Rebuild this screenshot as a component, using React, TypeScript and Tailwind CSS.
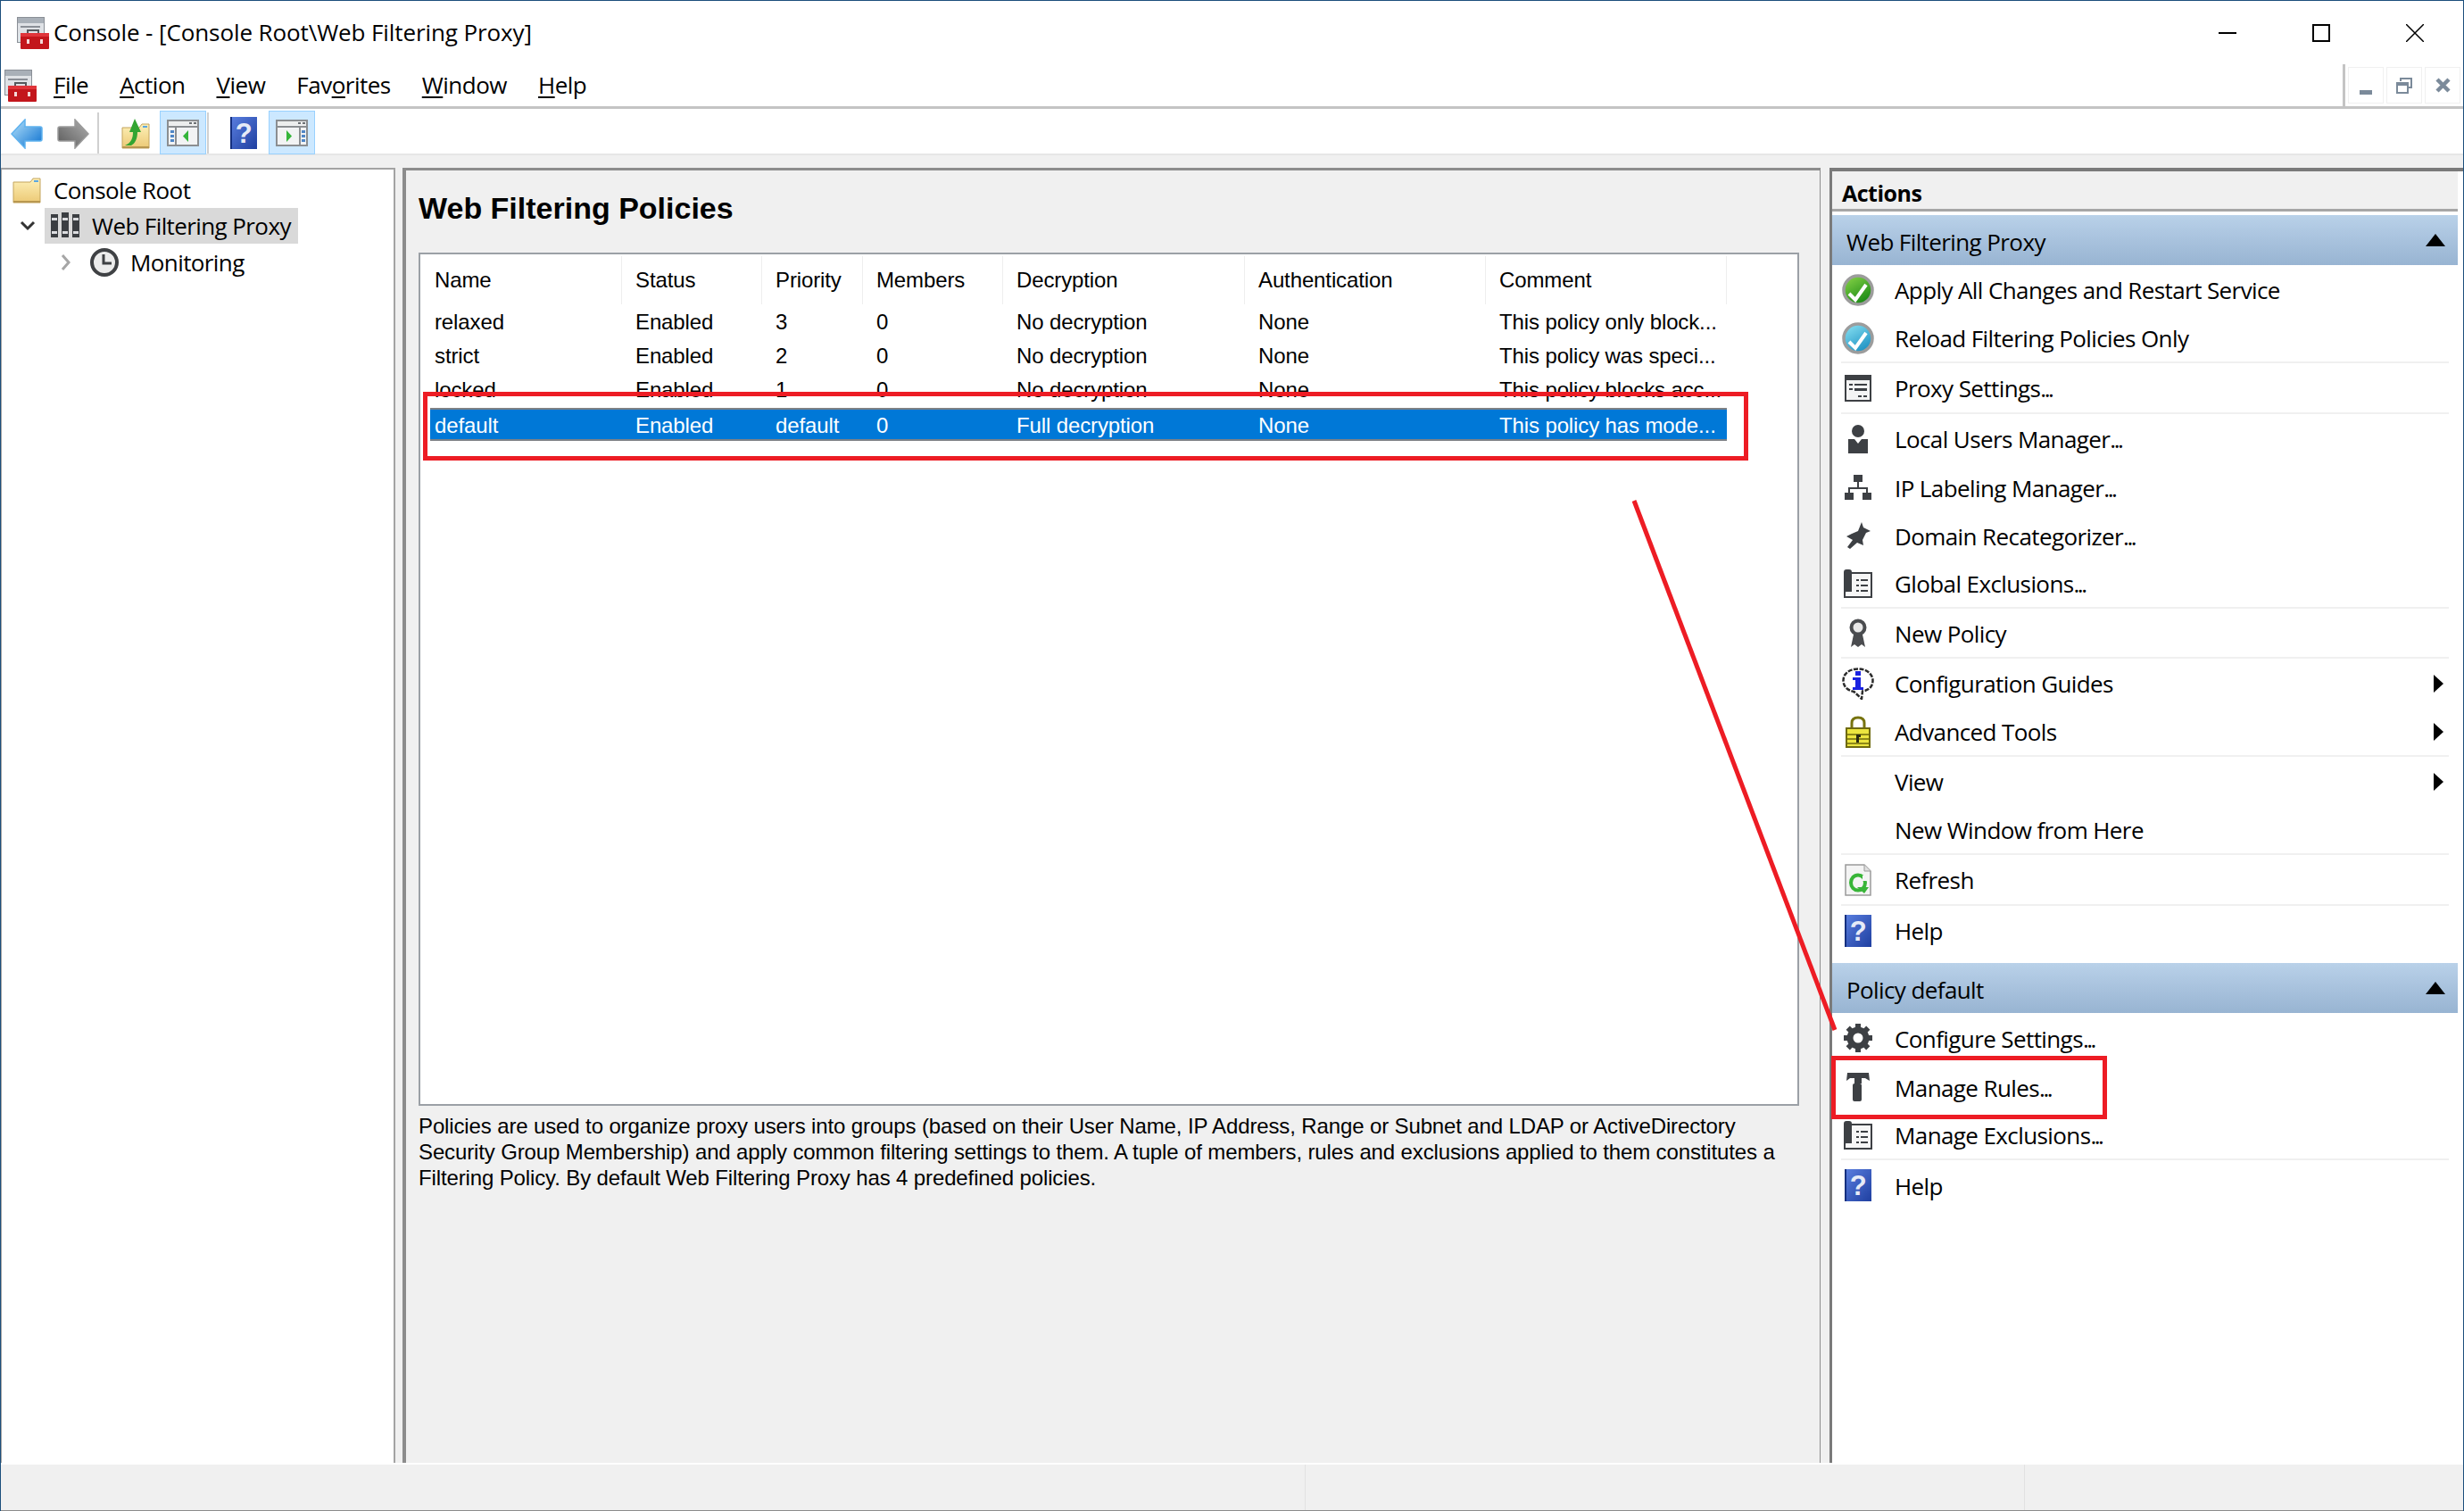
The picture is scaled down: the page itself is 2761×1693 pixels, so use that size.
import React from 'react';

const ui = "font-['Open_Sans','Noto_Sans',sans-serif]";
const classic = "font-['Liberation_Sans',Arial,sans-serif]";

const Toolbox = () => (
  <svg width="36" height="36" viewBox="0 0 36 36">
    <rect x="0.5" y="0.5" width="30" height="28" fill="#dfe2e6" stroke="#8a8f96" />
    <rect x="1" y="1" width="29" height="6" fill="#a9b0b8" />
    <rect x="4" y="10" width="22" height="2" fill="#8a8f96" />
    <path d="M12 19v-4h12v4" fill="none" stroke="#55585c" strokeWidth="2" />
    <rect x="4" y="18" width="32" height="18" rx="1" fill="#c3161c" />
    <rect x="4" y="18" width="32" height="4" fill="#e0343a" />
    <rect x="11" y="25" width="3" height="5" fill="#f4d9d9" />
    <rect x="26" y="25" width="3" height="5" fill="#f4d9d9" />
  </svg>
);

const Arrow = ({ dir, edge, from, to }: { dir: 'l' | 'r'; edge: string; from: string; to: string }) => (
  <svg width="36" height="34" viewBox="0 0 36 34">
    <defs>
      <linearGradient id={`arrow-${dir}`} x1={dir === 'l' ? '0' : '1'} y1="0" x2={dir === 'l' ? '1' : '0'} y2="1">
        <stop offset="0" stopColor={from} />
        <stop offset="1" stopColor={to} />
      </linearGradient>
    </defs>
    <path
      d={dir === 'l' ? 'M1 17 16 1v8h17q2 0 2 2v12q0 2-2 2H16v8z' : 'M35 17 20 1v8H3q-2 0-2 2v12q0 2 2 2h17v8z'}
      fill={`url(#arrow-${dir})`}
      stroke={edge}
      strokeWidth="1.500"
    />
  </svg>
);

const Folder = ({ up }: { up?: boolean }) => (
  <svg width="32" height={up ? 34 : 30} viewBox={up ? '0 -4 32 34' : '0 0 32 30'}>
    <defs>
      <linearGradient id="folder-fill" x1="0" y1="0" x2="0" y2="1">
        <stop offset="0" stopColor="#fdf0b8" />
        <stop offset="1" stopColor="#ecc975" />
      </linearGradient>
    </defs>
    <path d="M1 29V6h19l3-4h8v27z" fill="url(#folder-fill)" stroke="#c3a45c" />
    <rect x="1" y="27" width="30" height="2" fill="#b8974f" />
    <rect x="24" y="4" width="5" height="2" fill="#5aa7e0" />
    {up && <path d="M4 26c7-3 9-8 9-15H9l6-15 7 15h-4c0 8-3 13-7 15z" fill="#33a532" />}
  </svg>
);

const PanelToggle = ({ flip }: { flip?: boolean }) => (
  <svg width="36" height="30" viewBox="0 0 36 30">
    <rect x="1" y="1" width="34" height="28" fill="#f2f3f4" stroke="#8b8e91" strokeWidth="2" />
    <rect x="2" y="2" width="32" height="4" fill="#eceded" />
    <rect x="25" y="3" width="3" height="2" fill="#6c7074" />
    <rect x="30" y="3" width="3" height="2" fill="#6c7074" />
    <rect x="1" y="7" width="34" height="2" fill="#8b8e91" />
    <rect x={flip ? 26 : 9} y="9" width="2" height="20" fill="#8b8e91" />
    {[12, 17, 22].map(y => (
      <rect key={y} x={flip ? 29 : 4} y={y} width="4" height="3" fill="#4f86c6" />
    ))}
    <path d={flip ? 'M12 12v13l6-6.500z' : 'M24 12v13l-6-6.500z'} fill="#35b53a" />
  </svg>
);

const HelpBook = ({ w = 30, h = 36 }: { w?: number; h?: number }) => (
  <svg width={w} height={h} viewBox="0 0 30 36">
    <defs>
      <linearGradient id={`help-${w}`} x1="0" y1="0" x2="1" y2="1">
        <stop offset="0" stopColor="#5a7fe0" />
        <stop offset="1" stopColor="#1f3fa0" />
      </linearGradient>
    </defs>
    <rect width="30" height="36" fill={`url(#help-${w})`} />
    <rect x="0" y="0" width="2" height="36" fill="#15307f" />
    <text x="15" y="29" textAnchor="middle" fontSize="31" fontWeight="700" fill="#e6ebf7" fontFamily="Liberation Sans">?</text>
  </svg>
);

const Books = () => (
  <svg width="34" height="30" viewBox="0 0 34 30">
    {[1, 13, 25].map(x => (
      <g key={x}>
        <rect x={x} y={x === 13 ? 0 : 2} width="8" height={x === 13 ? 28 : 26} fill="#3b3e42" />
        <rect x={x + 1} y="6" width="6" height="3" fill="#dcdde0" />
        <rect x={x + 1} y="21" width="6" height="3" fill="#dcdde0" />
      </g>
    ))}
  </svg>
);

const Clock = () => (
  <svg width="32" height="32" viewBox="0 0 32 32">
    <circle cx="16" cy="16" r="14" fill="#ececec" stroke="#3f4144" strokeWidth="4" />
    <path d="M15 7v10h9" fill="none" stroke="#3f4144" strokeWidth="3" />
  </svg>
);

const Check = ({ light, dark }: { light: string; dark: string }) => (
  <svg width="36" height="36" viewBox="0 0 36 36">
    <defs>
      <linearGradient id={`check-${dark}`} x1="0" y1="0" x2="0.6" y2="1">
        <stop offset="0" stopColor={light} />
        <stop offset="1" stopColor={dark} />
      </linearGradient>
    </defs>
    <circle cx="18" cy="18" r="16" fill={`url(#check-${dark})`} stroke="#9c9c9c" strokeWidth="3.500" />
    <path d="M8 22l7 7 12-17" fill="none" stroke="#fff" strokeWidth="4" />
  </svg>
);

const ProxySettingsIcon = () => (
  <svg width="30" height="30" viewBox="0 0 30 30">
    <rect x="1" y="1" width="28" height="28" fill="#f4f4f4" stroke="#3d4044" strokeWidth="2" />
    <rect x="1" y="1" width="28" height="5" fill="#3d4044" />
    <rect x="5" y="10" width="4" height="2" fill="#3d4044" />
    <rect x="11" y="10" width="14" height="2" fill="#3d4044" />
    <rect x="5" y="15" width="4" height="2" fill="#3d4044" />
    <rect x="11" y="15" width="14" height="3" fill="#3d4044" />
    <rect x="15" y="23" width="4" height="2" fill="#3d4044" />
    <rect x="21" y="23" width="4" height="2" fill="#3d4044" />
  </svg>
);

const UserIcon = () => (
  <svg width="24" height="32" viewBox="0 0 24 32">
    <ellipse cx="12" cy="7" rx="7" ry="7" fill="#3d4044" />
    <path d="M1 16h7l4 5 4-5h7v16H1z" fill="#3d4044" />
  </svg>
);

const TreeIcon = () => (
  <svg width="30" height="28" viewBox="0 0 30 28">
    <rect x="10" y="0" width="10" height="8" fill="#3d4044" />
    <path d="M15 8v6M5 20v-5h20v5" fill="none" stroke="#3d4044" strokeWidth="2" />
    <rect x="0" y="20" width="10" height="8" fill="#3d4044" />
    <rect x="20" y="20" width="10" height="8" fill="#3d4044" />
  </svg>
);

const PinIcon = () => (
  <svg width="30" height="30" viewBox="0 0 30 30">
    <path d="M19 0l2 6 8 4-5 2-4 8 1 6-7-3-8 7-3-2 6-8-7-4 6-3 7-3z" fill="#3d4044" />
  </svg>
);

const ScrollIcon = () => (
  <svg width="32" height="32" viewBox="0 0 32 32">
    <rect x="1" y="4" width="30" height="27" fill="#f6f6f6" stroke="#3d4044" strokeWidth="2" />
    <path d="M0 28V3q0-3 3-3h3q3 0 3 3v22H3q-3 0-3 3z" fill="#3d4044" />
    {[11, 17, 23].map(y => (
      <g key={y}>
        <rect x="14" y={y} width="3" height="2" fill="#3d4044" />
        <rect x="19" y={y} width="8" height="2" fill="#3d4044" />
      </g>
    ))}
  </svg>
);

const RibbonIcon = () => (
  <svg width="20" height="32" viewBox="0 0 20 32">
    <path d="M5 18 2 32l4-3 4 3 4-3 4 3-3-14z" fill="#4a4c4f" />
    <circle cx="10" cy="10" r="7.500" fill="#e8e8e8" stroke="#4a4c4f" strokeWidth="4" />
  </svg>
);

const InfoIcon = () => (
  <svg width="36" height="36" viewBox="0 0 36 36">
    <path d="M18 1.500C8 1.500 1.500 7 1.500 14.500c0 7 5 11 12 12.500L22 35l1-8.500c7-1 11.500-5 11.500-12S28 1.500 18 1.500z" fill="#fff" stroke="#2b2b2b" strokeWidth="2.500" strokeDasharray="5 1.500" />
    <rect x="15" y="4" width="6" height="5" fill="#1a22e0" />
    <path d="M12 11h9v11h3v3H12v-3h3v-8h-3z" fill="#1a22e0" />
  </svg>
);

const LockIcon = () => (
  <svg width="28" height="36" viewBox="0 0 28 36">
    <path d="M7 16V8q0-6 7-6t7 6v8" fill="none" stroke="#77730f" strokeWidth="3" />
    <rect x="1" y="14" width="26" height="21" fill="#ece53f" stroke="#6f6a10" strokeWidth="2" />
    <rect x="2" y="20" width="24" height="2" fill="#8d8818" />
    <rect x="2" y="25" width="24" height="2" fill="#8d8818" />
    <rect x="2" y="30" width="24" height="2" fill="#8d8818" />
    <rect x="12" y="21" width="5" height="3" fill="#2a2a10" />
    <rect x="12" y="21" width="3" height="9" fill="#2a2a10" />
  </svg>
);

const RefreshIcon = () => (
  <svg width="30" height="36" viewBox="0 0 30 36">
    <path d="M1 1h21l7 7v27H1z" fill="#f4f4f4" stroke="#9a9a9a" strokeWidth="1.500" />
    <path d="M22 1v7h7" fill="#e0e0e0" stroke="#9a9a9a" />
    <ellipse cx="15" cy="21" rx="8" ry="8.500" fill="none" stroke="#38b538" strokeWidth="4" />
    <path d="M14 26h13l-5 7z" fill="#38b538" />
    <rect x="20" y="13" width="6" height="6" fill="#f4f4f4" />
  </svg>
);

const GearIcon = () => (
  <svg width="32" height="32" viewBox="0 0 32 32">
    <circle cx="16" cy="16" r="9" fill="none" stroke="#3d4044" strokeWidth="7" />
    <path d="M16 0v6M16 26v6M0 16h6M26 16h6M4.700 4.700l4.300 4.300M23 23l4.300 4.300M27.300 4.700 23 9M9 23l-4.300 4.300" stroke="#3d4044" strokeWidth="6" />
  </svg>
);

const HammerIcon = () => (
  <svg width="28" height="32" viewBox="0 0 28 32">
    <path d="M2 0h24l1 9-5-3h-4v6H10V6H5L1 9z" fill="#3d4044" />
    <rect x="8" y="12" width="10" height="20" rx="2" fill="#3d4044" />
  </svg>
);

const Triangle = ({ up }: { up?: boolean }) =>
  up ? (
    <svg width="22" height="14" viewBox="0 0 22 14"><path d="M11 0 22 14H0z" fill="#000" /></svg>
  ) : (
    <svg width="11" height="20" viewBox="0 0 11 20"><path d="M0 0 11 10 0 20z" fill="#000" /></svg>
  );

type Action = { label: string; icon?: React.ReactNode; h: string; sep?: boolean; more?: boolean };

const proxyActions: Action[] = [
  { label: 'Apply All Changes and Restart Service', icon: <Check light="#8ed84a" dark="#1b8a16" />, h: 'h-[55px]' },
  { label: 'Reload Filtering Policies Only', icon: <Check light="#8fe6f5" dark="#1f93c4" />, h: 'h-[55px]', sep: true },
  { label: 'Proxy Settings...', icon: <ProxySettingsIcon />, h: 'h-[57px]', sep: true },
  { label: 'Local Users Manager...', icon: <UserIcon />, h: 'h-[55px]' },
  { label: 'IP Labeling Manager...', icon: <TreeIcon />, h: 'h-[54px]' },
  { label: 'Domain Recategorizer...', icon: <PinIcon />, h: 'h-[54px]' },
  { label: 'Global Exclusions...', icon: <ScrollIcon />, h: 'h-[55px]', sep: true },
  { label: 'New Policy', icon: <RibbonIcon />, h: 'h-[56px]', sep: true },
  { label: 'Configuration Guides', icon: <InfoIcon />, h: 'h-[55px]', more: true },
  { label: 'Advanced Tools', icon: <LockIcon />, h: 'h-[55px]', more: true, sep: true },
  { label: 'View', h: 'h-[55px]', more: true },
  { label: 'New Window from Here', h: 'h-[55px]', sep: true },
  { label: 'Refresh', icon: <RefreshIcon />, h: 'h-[57px]', sep: true },
  { label: 'Help', icon: <HelpBook />, h: 'h-[55px]' },
];

const policyActions: Action[] = [
  { label: 'Configure Settings...', icon: <GearIcon />, h: 'h-[56px]' },
  { label: 'Manage Rules...', icon: <HammerIcon />, h: 'h-[54px]' },
  { label: 'Manage Exclusions...', icon: <ScrollIcon />, h: 'h-[55px]', sep: true },
  { label: 'Help', icon: <HelpBook />, h: 'h-[56px]' },
];

const policies = [
  ['relaxed', 'Enabled', '3', '0', 'No decryption', 'None', 'This policy only block...'],
  ['strict', 'Enabled', '2', '0', 'No decryption', 'None', 'This policy was speci...'],
  ['locked', 'Enabled', '1', '0', 'No decryption', 'None', 'This policy blocks acc...'],
];
const selectedPolicy = ['default', 'Enabled', 'default', '0', 'Full decryption', 'None', 'This policy has mode...'];
const columns = ['Name', 'Status', 'Priority', 'Members', 'Decryption', 'Authentication', 'Comment'];
const grid = 'grid grid-cols-[215px_157px_113px_157px_271px_270px_270px] w-[1453px]';

const Key = ({ children }: { children: React.ReactNode }) => <span className="underline underline-offset-[3px]">{children}</span>;

// the dots sit tighter in the original than Open Sans sets them
const Label = ({ text }: { text: string }) =>
  text.endsWith('...') ? (
    <>{text.slice(0, -3)}<span className="tracking-[-2.5px]">...</span></>
  ) : (
    <>{text}</>
  );

const ActionRow = ({ a }: { a: Action }) => (
  <div className={`${a.h} mx-[10px] pl-[1px] pr-[6px] flex items-center ${a.sep ? 'border-b-2 border-[#f0f0f0]' : ''}`}>
    <div className="w-[36px] h-[36px] flex items-center justify-center shrink-0">{a.icon}</div>
    <span className="ml-[23px] pt-[2px]"><Label text={a.label} /></span>
    {a.more && <span className="ml-auto flex"><Triangle /></span>}
  </div>
);

const SectionHeader = ({ label }: { label: string }) => (
  <div className="h-[56px] flex items-center justify-between pl-[16px] pr-[14px] bg-gradient-to-b from-[#b9d1e9] to-[#98b4d2]">
    <span className="pt-[5px]">{label}</span>
    <Triangle up />
  </div>
);

export default function App() {
  return (
    <div className={`relative w-[2761px] h-[1693px] overflow-hidden bg-white text-black flex flex-col border-x border-t border-[#1c4f7c] ${ui} text-[26px] tracking-[-0.6px]`}>
      {/* title bar */}
      <div className="h-[71px] shrink-0 flex items-center">
        <div className="ml-[18px] mr-[5px] flex"><Toolbox /></div>
        <span className="tracking-[-0.1px]">Console - [Console Root\Web Filtering Proxy]</span>
        <div className="ml-auto flex items-center">
          <div className="w-[20px] h-[2px] bg-black mr-[85px]" />
          <div className="w-[20px] h-[20px] border-2 border-black mr-[85px]" />
          <svg className="mr-[44px]" width="20" height="20" viewBox="0 0 20 20"><path d="M0 0 20 20M20 0 0 20" stroke="#000" strokeWidth="1.500" /></svg>
        </div>
      </div>

      {/* menu bar */}
      <div className="h-[50px] shrink-0 flex items-stretch">
        <div className="flex-1 flex items-center border-b-[3px] border-[#c4c4c4] border-r-[3px]">
          <div className="ml-[4px] flex"><Toolbox /></div>
          <div className="flex ml-[19px] gap-[35px] tracking-[-0.5px]">
            <span><Key>F</Key>ile</span>
            <span><Key>A</Key>ction</span>
            <span><Key>V</Key>iew</span>
            <span>Fav<Key>o</Key>rites</span>
            <span><Key>W</Key>indow</span>
            <span><Key>H</Key>elp</span>
          </div>
        </div>
        <div className="w-[132px] flex items-center pl-[3px] gap-[3px] border-b-[3px] border-[#c4c4c4]">
          <div className="w-[40px] h-[41px] border border-[#f0f0f0] flex items-end justify-center pb-[9px]"><div className="w-[14px] h-[5px] bg-[#7b8a9a]" /></div>
          <div className="w-[40px] h-[41px] border border-[#f0f0f0] flex items-center justify-center">
            <svg width="18" height="18" viewBox="0 0 18 18"><path d="M5 4V1h12v10h-4" fill="none" stroke="#7b8a9a" strokeWidth="2" /><rect x="1" y="6" width="12" height="11" fill="none" stroke="#7b8a9a" strokeWidth="2" /><rect x="1" y="6" width="12" height="3" fill="#7b8a9a" /></svg>
          </div>
          <div className="w-[40px] h-[41px] border border-[#f0f0f0] flex items-center justify-center">
            <svg width="17" height="17" viewBox="0 0 17 17"><path d="M2 2 15 15M15 2 2 15" stroke="#7b8a9a" strokeWidth="4.500" /></svg>
          </div>
        </div>
      </div>

      {/* toolbar */}
      <div className="h-[52px] shrink-0 flex items-center pl-[11px] pt-[3px] border-b-2 border-[#e6e6e6]">
        <div className="mt-[3px] flex"><Arrow dir="l" edge="#5fb2ee" from="#b6e3fb" to="#0a6fcf" /></div>
        <div className="ml-[16px] mt-[3px] flex"><Arrow dir="r" edge="#9a9a9a" from="#b0b0b0" to="#585858" /></div>
        <div className="w-[2px] h-[46px] bg-[#d0d0d0] ml-[9px]" />
        <div className="ml-[25px] mt-[3px] flex"><Folder up /></div>
        <div className="ml-[11px] w-[52px] h-[49px] bg-[#cce8ff] border border-[#99d1ff] flex items-center justify-center"><PanelToggle /></div>
        <div className="w-[2px] h-[46px] bg-[#d0d0d0] ml-[1px]" />
        <div className="ml-[24px] flex"><HelpBook /></div>
        <div className="ml-[13px] w-[52px] h-[49px] bg-[#cce8ff] border border-[#99d1ff] flex items-center justify-center"><PanelToggle flip /></div>
      </div>

      {/* panes */}
      <div className="flex-1 flex bg-[#f0f0f0] pt-[14px] min-h-0">
        {/* tree */}
        <div className="w-[442px] shrink-0 bg-white border-t-2 border-r-2 border-l border-[#a3a3a3] pt-[5px] pl-[12px]">
          <div className="h-[36px] flex items-center">
            <Folder />
            <span className="ml-[14px]">Console Root</span>
          </div>
          <div className="h-[40px] mt-[2px] flex items-center">
            <svg className="ml-[8px]" width="18" height="12" viewBox="0 0 18 12"><path d="M2 2l7 7 7-7" fill="none" stroke="#333" strokeWidth="3" /></svg>
            <div className="ml-[10px] h-[40px] w-[284px] bg-[#d9d9d9] flex items-center pl-[6px]">
              <Books />
              <span className="ml-[13px]">Web Filtering Proxy</span>
            </div>
          </div>
          <div className="h-[42px] flex items-center">
            <svg className="ml-[54px]" width="12" height="20" viewBox="0 0 12 20"><path d="M2 2l7 8-7 8" fill="none" stroke="#a6a6a6" strokeWidth="3" /></svg>
            <div className="ml-[21px] flex"><Clock /></div>
            <span className="ml-[13px]">Monitoring</span>
          </div>
        </div>

        {/* policies */}
        <div className={`ml-[8px] w-[1589px] shrink-0 border-t-[3px] border-l-4 border-r border-[#8c8c8c] pl-[14px] ${classic} text-[24px] tracking-[-0.12px]`}>
          <h1 className="mt-[22px] h-[40px] flex items-center text-[34px] font-bold leading-none tracking-normal">Web Filtering Policies</h1>
          <div className="mt-[30px] w-[1547px] h-[956px] bg-white border-2 border-[#9ba0a6] pl-[11px]">
            <div className={`${grid} h-[57px] items-center`}>
              {columns.map((c, i) => (
                <div key={c} className={`h-[54px] flex items-center border-r border-[#eeeeee] ${i === 0 ? 'pl-[5px]' : 'pl-[15px]'}`}>{c}</div>
              ))}
            </div>
            {policies.map(row => (
              <div key={row[0]} className={`${grid} h-[38px] items-center`}>
                {row.map((v, i) => (
                  <div key={i} className={i === 0 ? 'pl-[5px]' : 'pl-[15px]'}>{v}</div>
                ))}
              </div>
            ))}
            <div className={`${grid} h-[37px] mt-px items-center bg-[#0078d7] text-white border-y-2 border-[#7d8186]`}>
              {selectedPolicy.map((v, i) => (
                <div key={i} className={i === 0 ? 'pl-[5px]' : 'pl-[15px]'}>{v}</div>
              ))}
            </div>
          </div>
          <p className="mt-[8px] w-[1530px] leading-[29px] text-[24px] tracking-[-0.13px]">
            Policies are used to organize proxy users into groups (based on their User Name, IP Address, Range or Subnet and LDAP or ActiveDirectory Security Group Membership) and apply common filtering settings to them. A tuple of members, rules and exclusions applied to them constitutes a Filtering Policy. By default Web Filtering Proxy has 4 predefined policies.
          </p>
        </div>

        {/* actions */}
        <div className="ml-[10px] flex-1 bg-white border-t-4 border-l-[3px] border-[#7a7a7a] pr-[6px]">
          <div className="h-[45px] bg-[#f0f0f0] border-b-[3px] border-[#a6a6a6] flex items-center pl-[11px] pt-[7px] font-bold text-[25px] tracking-[-0.5px]">Actions</div>
          <div className="h-[4px]" />
          <SectionHeader label="Web Filtering Proxy" />
          {proxyActions.map(a => <ActionRow key={a.label} a={a} />)}
          <div className="h-[9px]" />
          <SectionHeader label="Policy default" />
          {policyActions.map(a => <ActionRow key={a.label} a={a} />)}
        </div>
      </div>

      {/* status bar */}
      <div className="h-[54px] shrink-0 flex bg-[#f0f0f0] border-t-2 border-white border-b border-b-[#8c8c8c]">
        <div className="w-[1462px] border-r border-[#e2e2e2]" />
        <div className="w-[806px] border-r border-[#e2e2e2]" />
      </div>

      {/* annotation overlays */}
      <div className="absolute left-[473px] top-[438px] w-[1485px] h-[77px] border-[5px] border-[#ed1c24]" />
      <div className="absolute left-[2051px] top-[1182px] w-[309px] h-[71px] border-[5px] border-[#ed1c24]" />
      <svg className="absolute left-0 top-0 pointer-events-none" width="2761" height="1693">
        <path d="M1830 560 2055 1153" stroke="#ed1c24" strokeWidth="5" />
      </svg>
    </div>
  );
}
